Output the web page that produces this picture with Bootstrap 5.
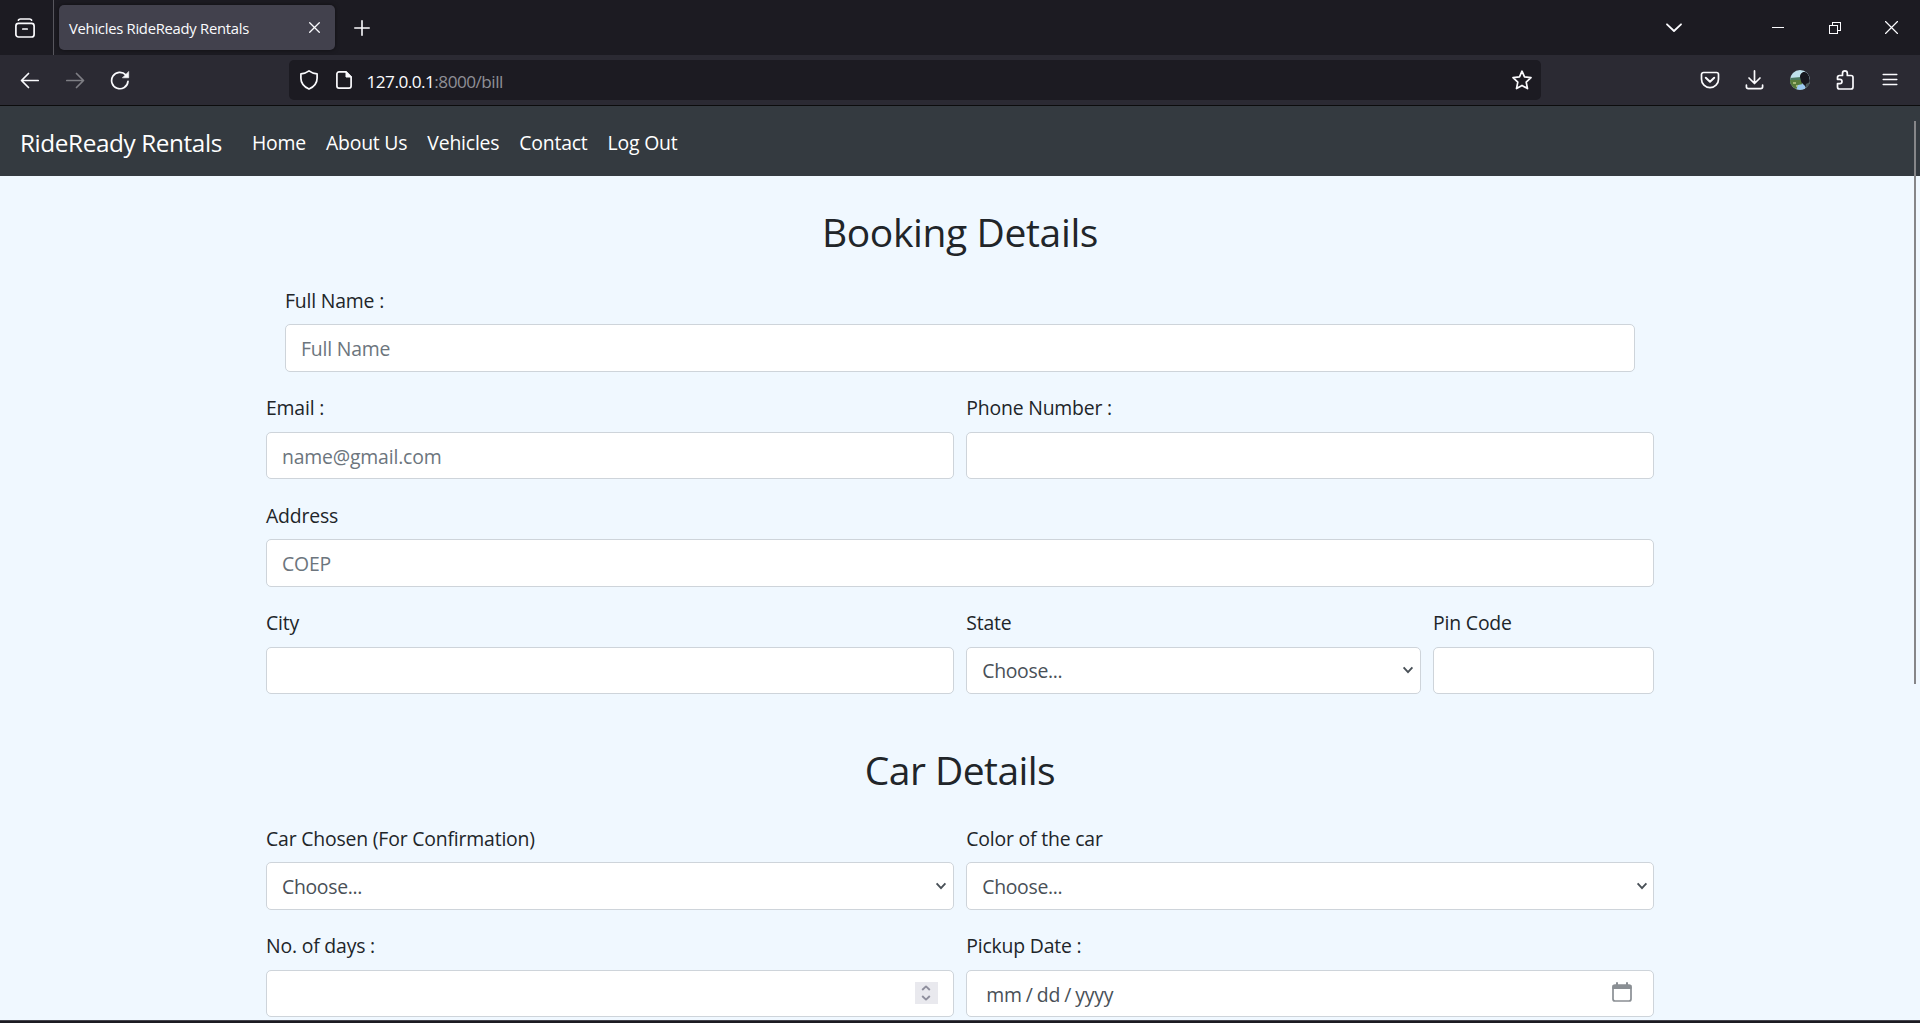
<!DOCTYPE html>
<html lang="en">
<head>
<meta charset="utf-8">
<meta name="viewport" content="width=device-width, initial-scale=1">
<title>Vehicles RideReady Rentals</title>
<link href="https://cdn.jsdelivr.net/npm/bootstrap@5.3.0/dist/css/bootstrap.min.css" rel="stylesheet">
<style>
html{font-size:20px}
body{font-family:"Open Sans","Noto Sans",sans-serif;font-size:19.4px;letter-spacing:-.18px;line-height:30px;height:1023px;overflow:hidden;background:#1c1b22;color:#212529}
svg{display:block;fill:none;stroke:#fbfbfe;stroke-width:1.7;stroke-linecap:round;stroke-linejoin:round;flex:none}
.tabstrip{height:55px;background:#1c1b22}
.firefox-view{width:54px;border-right:1px solid #57565d;padding-left:15px}
.browser-tab{width:276px;height:45px;margin-left:5px;padding:0 15px 0 10px;border-radius:5px;background:#42414d;color:#fbfbfe;font-size:14.8px;letter-spacing:-.27px;box-shadow:0 0 4px rgba(0,0,0,.5)}
.new-tab{margin-left:18.5px}
.win-btn{width:57px;display:flex;justify-content:center}
.list-tabs{margin-right:47px}
.toolstrip{height:51px;background:#2b2a33;border-bottom:1px solid #0c0c0d;padding:0 7.5px}
.tool-btn{width:45px;display:flex;justify-content:center}
.urlbar{width:1252px;height:40px;margin-left:146.5px;border-radius:5px;background:#1c1b22;padding:0 9px 0 10px;color:#8f8f96;font-size:17.2px;letter-spacing:-.52px}
.urlbar b{font-weight:400;color:#fbfbfe}
.page-info{margin-left:17px}
.url-text{margin-left:14.5px;padding-top:3px}
.site-nav{height:70px;padding:3px 20px 0;background:#343a40}
.site-nav .navbar-brand{font-size:24.3px;letter-spacing:-.39px;margin:0 20px 0 0;padding:0;color:#fff}
.site-nav .nav-link{padding:0 10px;color:#fff;line-height:30px;letter-spacing:-.2px}
.page-body{height:844px;background:#f0f8ff;overflow:hidden}
.booking{width:1388px;margin:0 auto;padding-top:32.5px}
.booking h2{font-size:39px;line-height:46px;letter-spacing:-.37px;font-weight:400;margin:0;height:75.5px}
.booking .second-title{margin-top:32.5px;letter-spacing:-.55px}
.booking .row{--bs-gutter-x:12.5px}
.field{margin-bottom:20px}
.field label{display:block;line-height:30px;padding-top:1.5px;margin-bottom:8.5px}
.field .form-control,.field .form-select{height:47.5px;font-size:19.4px;letter-spacing:-.18px;border-color:#ced4da;border-radius:5px;padding:8.5px 15px 6.5px;color:#495057;line-height:30px;background-color:#fff}
.field .form-control::placeholder{color:#6c757d;opacity:1}
.field .form-select{letter-spacing:-.3px;background-image:url("data:image/svg+xml,%3Csvg xmlns='http://www.w3.org/2000/svg' viewBox='0 0 12 8'%3E%3Cpath d='M1.6 1.4 6 6.1l4.4-4.7' fill='none' stroke='%23495057' stroke-width='1.9'/%3E%3C/svg%3E");background-size:12px 8px;background-position:right 5.5px center}
.field .date-text{padding-left:19px;padding-top:9px;word-spacing:-.8px}
.inset{padding:0 19px}
.step-btns{position:absolute;right:16px;top:12px;width:23px;height:22px;background:#e9e9ee}
.cal-icon{position:absolute;right:22px;top:12px}
.scroll-thumb{position:absolute;left:1914px;top:121px;width:2px;height:563px;background:#868689}
.page-end{height:3px;border-top:1px solid #45444c;background:#1c1b22}
</style>
</head>
<body>
<div class="tabstrip d-flex align-items-stretch">
  <div class="firefox-view d-flex align-items-center">
    <svg width="20" height="20" viewBox="0 0 20 20"><rect x=".9" y="5.3" width="18.2" height="13.7" rx="2.6"/><path d="M3.4 2.2C3.8 1.3 4.6 1 5.4 1h9.2c.8 0 1.6.3 2 1.2M7.8 11h4.4"/></svg>
  </div>
  <div class="browser-tab d-flex align-items-center justify-content-between align-self-center">
    <span>Vehicles RideReady Rentals</span>
    <svg width="11" height="11" viewBox="0 0 11 11"><path d="m.7.7 9.6 9.6M10.3.7.7 10.3" stroke-width="1.3"/></svg>
  </div>
  <div class="new-tab d-flex align-items-center"><svg width="16" height="16" viewBox="0 0 16 16"><path d="M8 .8v14.4M.8 8h14.4" stroke-width="1.6"/></svg></div>
  <div class="d-flex align-items-center ms-auto">
    <div class="win-btn list-tabs"><svg width="16" height="10" viewBox="0 0 16 10"><path d="m1 1.3 7 6.7 7-6.7" stroke-width="1.8"/></svg></div>
    <div class="win-btn"><svg width="12" height="12" viewBox="0 0 12 12" shape-rendering="crispEdges"><path d="M0 5.5h12" stroke-width="1" stroke-linecap="butt"/></svg></div>
    <div class="win-btn"><svg width="12" height="12" viewBox="0 0 12 12" shape-rendering="crispEdges"><path d="M.5 3.5h8v8h-8zM3.5 3V.5h8v8H9" stroke-width="1" stroke-linejoin="miter"/></svg></div>
    <div class="win-btn"><svg width="13" height="13" viewBox="0 0 13 13"><path d="m.5.5 12 12M12.5.5l-12 12" stroke-width="1.2"/></svg></div>
  </div>
</div>
<div class="toolstrip d-flex align-items-center">
  <div class="tool-btn"><svg width="20" height="20" viewBox="0 0 20 20"><path d="M18.2 10.500H1.800M8.500 3.500l-7 7 7 7"/></svg></div>
  <div class="tool-btn"><svg width="20" height="20" viewBox="0 0 20 20" opacity=".4"><path d="M1.800 10.500h16.400M11.500 3.500l7 7-7 7"/></svg></div>
  <div class="tool-btn"><svg width="20" height="20" viewBox="0 0 20 20"><path d="M18 11.300a8.200 8.200 0 1 1-2.200-6.400L17 6.100"/><path d="M18.700 1.800v6h-6z" fill="#fbfbfe" stroke-width=".6"/></svg></div>
  <div class="urlbar d-flex align-items-center">
    <svg width="20" height="20" viewBox="0 0 20 20"><path d="M10 .9c2.500 1.900 5 2.800 8.100 3v4.300c0 5-3.100 8.500-8.100 10.900-5-2.400-8.100-5.900-8.100-10.900V3.900C5 3.700 7.500 2.800 10 .9z"/></svg>
    <svg class="page-info" width="16" height="18" viewBox="0 0 16 18"><path d="M10 .9H3A2.100 2.100 0 0 0 .9 3v12A2.100 2.100 0 0 0 3 17.100h10a2.100 2.100 0 0 0 2.100-2.100V6z"/><path d="M10 .9V6h5.100z" fill="#fbfbfe" stroke-width="1"/></svg>
    <span class="url-text"><b>127.0.0.1</b>:8000/bill</span>
    <svg class="ms-auto" width="20" height="20" viewBox="0 0 20 20"><path d="m10 1.200 2.500 5.700 6.500.7-4.800 4.500 1.300 6.500L10 15.400l-5.500 3.200 1.300-6.500L1 7.600l6.500-.7z"/></svg>
  </div>
  <div class="d-flex align-items-center ms-auto">
    <div class="tool-btn"><svg width="20" height="20" viewBox="0 0 20 20"><path d="M3.500 2.500h13a2 2 0 0 1 2 2v4.700a8.500 8.500 0 0 1-17 0V4.500a2 2 0 0 1 2-2z"/><path d="m5.800 7.800 4.200 4 4.200-4" stroke-width="2"/></svg></div>
    <div class="tool-btn"><svg width="20" height="20" viewBox="0 0 20 20"><path d="M9.500.9v12M4 8l5.500 5.500L15 8M1.400 15.200v1.500c0 1.200.9 1.900 1.900 1.900h12.400c1 0 1.900-.7 1.900-1.900v-1.500"/></svg></div>
    <div class="tool-btn"><svg width="20" height="20" viewBox="0 0 20 20"><defs><clipPath id="face"><circle cx="10" cy="10" r="10"/></clipPath></defs><g clip-path="url(#face)" stroke="none"><path fill="#bfe0ec" d="M0 0h20v20H0z"/><path fill="#4c7a62" d="M0 8 11 7v8H0z"/><path fill="#587b3b" d="M0 10h12v10H0z"/><path fill="#a5b776" d="M3 12h3v2H3zM6 15h3v2H6z"/><path fill="#17171f" d="M10 7c0-4 3-5.500 5-5 4 1 5 6 5 10l-3 6-4-3c0-2-2-2-2-4z"/><path fill="#9bc9f1" d="m8 15 5-1 2 2v4H6z"/><path fill="#4b5a5b" d="m16 14 4-2v8h-5z"/></g></svg></div>
    <div class="tool-btn"><svg width="20" height="20" viewBox="0 0 20 20"><path d="M7.500 5.500V3.300a2.400 2.400 0 0 1 4.800 0v2.200H16a2 2 0 0 1 2 2V17a2 2 0 0 1-2 2H4.500a2 2 0 0 1-2-2v-3.300h2.300a2.200 2.200 0 0 0 0-4.400H2.500V7.500a2 2 0 0 1 2-2z"/></svg></div>
    <div class="tool-btn"><svg width="20" height="20" viewBox="0 0 20 20"><path d="M3.200 4.500h13.600M3.200 9.500h13.600M3.200 14.500h13.600" stroke-width="1.500"/></svg></div>
  </div>
</div>
<nav class="site-nav navbar navbar-expand navbar-dark">
  <a class="navbar-brand" href="#">RideReady Rentals</a>
  <ul class="navbar-nav">
    <li class="nav-item"><a class="nav-link" href="#">Home</a></li>
    <li class="nav-item"><a class="nav-link" href="#">About Us</a></li>
    <li class="nav-item"><a class="nav-link" href="#">Vehicles</a></li>
    <li class="nav-item"><a class="nav-link" href="#">Contact</a></li>
    <li class="nav-item"><a class="nav-link" href="#">Log Out</a></li>
  </ul>
</nav>
<main class="page-body">
  <form class="booking">
    <h2 class="text-center">Booking Details</h2>
    <div class="inset"><div class="field"><label for="fn">Full Name :</label><input class="form-control" id="fn" placeholder="Full Name"></div></div>
    <div class="row">
      <div class="col-6 field"><label for="em">Email :</label><input class="form-control" id="em" placeholder="name@gmail.com"></div>
      <div class="col-6 field"><label for="ph">Phone Number :</label><input class="form-control" id="ph"></div>
    </div>
    <div class="field"><label for="ad">Address</label><input class="form-control" id="ad" placeholder="COEP"></div>
    <div class="row">
      <div class="col-6 field"><label for="ci">City</label><input class="form-control" id="ci"></div>
      <div class="col-4 field"><label for="st">State</label><select class="form-select" id="st"><option>Choose...</option></select></div>
      <div class="col-2 field"><label for="pi">Pin Code</label><input class="form-control" id="pi"></div>
    </div>
    <h2 class="text-center second-title">Car Details</h2>
    <div class="row">
      <div class="col-6 field"><label for="cc">Car Chosen (For Confirmation)</label><select class="form-select" id="cc"><option>Choose...</option></select></div>
      <div class="col-6 field"><label for="co">Color of the car</label><select class="form-select" id="co"><option>Choose...</option></select></div>
    </div>
    <div class="row">
      <div class="col-6 field"><label for="nd">No. of days :</label>
        <div class="position-relative"><input class="form-control" id="nd">
          <span class="step-btns d-flex align-items-center justify-content-center"><svg width="10" height="16" viewBox="0 0 10 16"><path d="m1.200 5 3.800-3.600L8.800 5M1.200 11 5 14.600 8.800 11" stroke="#8f8f9d" stroke-width="1.900" stroke-linecap="butt"/></svg></span>
        </div></div>
      <div class="col-6 field"><label for="pd">Pickup Date :</label>
        <div class="position-relative"><input class="form-control date-text" id="pd" value="mm / dd / yyyy">
          <svg class="cal-icon" width="20" height="20" viewBox="0 0 20 20"><g stroke="#8a8f94"><rect x="1" y="3" width="18" height="16" rx="2"/><path d="M1.500 4h17M5 1v3M15 1v3" stroke-width="2"/><path d="M1.500 5.700h17" stroke-width="2.500"/></g></svg>
        </div></div>
    </div>
  </form>
</main>
<div class="page-end"></div>
<div class="scroll-thumb"></div>
</body>
</html>
